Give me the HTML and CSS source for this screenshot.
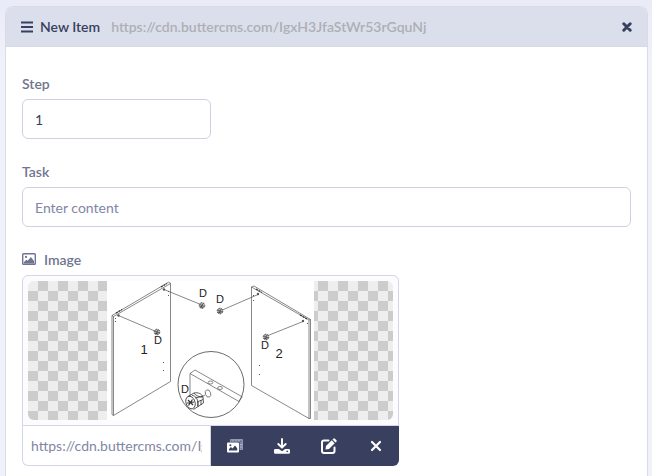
FILE: index.html
```html
<!DOCTYPE html>
<html lang="en">

<head>
    <meta charset="UTF-8">
    <meta name="viewport" content="width=device-width, initial-scale=1.0">
    <title>New Item</title>
    <link rel="stylesheet" href="styles.css">
</head>

<body>
    <div class="item">
        <div class="item-header">
            <svg class="drag" viewBox="0 0 12 12" width="12" height="12" aria-hidden="true">
                <path d="M0 1.500h12M0 6h12M0 10.500h12" stroke="currentColor" stroke-width="1.800"/>
            </svg>
            <span class="item-title">New Item</span>
            <span class="item-url">https://cdn.buttercms.com/IgxH3JfaStWr53rGquNj</span>
            <button class="item-close" type="button" aria-label="Remove item">
                <svg viewBox="0 0 10 10" width="10" height="10">
                    <path d="M1.8 1.8l6.4 6.4M8.2 1.8L1.8 8.2" stroke="currentColor" stroke-width="3" stroke-linecap="round"/>
                </svg>
            </button>
        </div>

        <form class="item-body">
            <div class="field">
                <label for="step">Step</label>
                <input class="text-input short" id="step" type="text" value="1">
            </div>

            <div class="field">
                <label for="task">Task</label>
                <input class="text-input" id="task" type="text" placeholder="Enter content">
            </div>

            <div class="field">
                <label for="image">
                    <svg viewBox="0 0 14 12" width="14" height="12" aria-hidden="true">
                        <rect x=".7" y=".7" width="12.6" height="10.6" rx=".8" fill="none" stroke="currentColor" stroke-width="1.4"/>
                        <circle cx="4" cy="3.9" r="1.1" fill="currentColor"/>
                        <path d="M2 10.5V9l2.400-2.300 1.300 1.100L8.900 4 12 8v2.500z" fill="currentColor"/>
                    </svg>
                    Image
                </label>
                <div class="media">
                    <div class="preview">
                        <div class="checker">
                            <svg class="drawing" viewBox="0 0 207 139" width="207" height="139">
                                <defs>
                                    <g id="cam">
                                        <circle r="2.800" fill="#bbb" stroke="#444" stroke-width=".9" stroke-dasharray="2 .8"/>
                                        <path d="M-2-1l4 2M-1 2l2-4M-2 1l3 1" stroke="#333" stroke-width=".7"/>
                                    </g>
                                </defs>
                                <rect width="207" height="139" fill="#fff"/>
                                <g fill="none" stroke="#555" stroke-width=".7">
                                    <!-- left panel -->
                                    <path d="M5 34.500L61.500 1.200l2 1V100.500L6.500 134.500 5 133.500zM6.500 134.500V35.500L63.500 2.500M5 34.500l1.500 1"/>
                                    <path d="M9 32l6-3.500M54 6l6-3.500" stroke="#333" stroke-width="1.300" stroke-dasharray="2 1"/>
                                    <!-- right panel -->
                                    <path d="M144.500 6V104.500L202 137.500h1.500V38.500L147 5zM144.500 6L202 39v98.500M202 39l1.500-.5"/>
                                    <path d="M149 8l6 3.500M193 34l7 4" stroke="#333" stroke-width="1.300" stroke-dasharray="2 1"/>
                                    <!-- leader lines -->
                                    <path d="M57 8.500L95 24M11.500 34.500L50 51M151 13.500L113 30M196 40.500L158.500 55.500"/>
                                    <!-- detail circle -->
                                    <circle cx="104" cy="103.500" r="33" stroke="#444" stroke-width=".8"/>
                                    <path d="M83 116V92.500l5-3.500 47.500 27M83 92.500L132 120.500M132 120.500l2.500-4.500"/>
                                    <ellipse cx="103.500" cy="101.500" rx="2.400" ry="1.500"/>
                                    <ellipse cx="113" cy="107" rx="2.400" ry="1.500"/>
                                    <ellipse cx="101" cy="112.500" rx="2.600" ry="3.800" transform="rotate(-20 101 112.500)"/>
                                    <path d="M98 114l-4 2"/>
                                </g>
                                <g fill="none" stroke="#333" stroke-width=".8">
                                    <ellipse cx="83.500" cy="121.500" rx="4.500" ry="6.500" transform="rotate(-20 83.500 121.500)"/>
                                    <path d="M81 115.500l6-3.500c4-1 8 1 9 4l.5 6-10 6.500M85 114.500c4 0 7 5 5.500 10.500M87 112c2 3 5 4 9 4M88 117l7-1.500M90 121l6-2.500M91 126v-5M94 124v-5"/>
                                    <path d="M81 119l5 5M85.500 118.500l-4 6M80 122l7-1" stroke-width="1.200"/>
                                </g>
                                <g fill="#555">
                                    <circle cx="57" cy="8.500" r="1.200"/>
                                    <circle cx="11.500" cy="34.500" r="1.200"/>
                                    <circle cx="151" cy="13" r="1.200"/>
                                    <circle cx="196" cy="40" r="1.200"/>
                                    <path d="M61 10h1v1h-1zM61 14h1v1h-1zM8 37h1v1H8zM8 40h1v1H8zM56 81h1v1h-1zM56 89h1v1h-1zM146 14h1v1h-1zM146 19h1v1h-1zM152 84h1v1h-1zM152 93h1v1h-1zM200 42h1v1h-1z"/>
                                </g>
                                <use href="#cam" x="95" y="24.500"/>
                                <use href="#cam" x="113" y="30"/>
                                <use href="#cam" x="50" y="51"/>
                                <use href="#cam" x="159" y="56"/>
                                <g class="drawing-text" text-anchor="middle">
                                    <text x="96" y="16">D</text>
                                    <text x="113" y="22">D</text>
                                    <text x="51" y="63">D</text>
                                    <text x="158" y="68">D</text>
                                    <text x="78" y="112">D</text>
                                    <text class="num" x="37" y="73">1</text>
                                    <text class="num" x="172" y="77">2</text>
                                </g>
                            </svg>
                        </div>
                    </div>
                    <div class="media-bar">
                        <input class="media-url" id="image" type="text" value="https://cdn.buttercms.com/IgxH3JfaStWr53rGquNj">
                        <div class="media-actions">
                            <button type="button" aria-label="Choose from library">
                                <svg viewBox="0 0 16 14" width="16" height="14">
                                    <path d="M3.500 3V.5h12v10h-3" fill="none" stroke="#9198b3"/>
                                    <path d="M4 1h11v1.800H4zM12.500 3H15v7h-2.500z" fill="#7b84a3"/>
                                    <path d="M6 1v1.500M9 1v1.500M12 1v1.500M13 5.500h2M13 8h2" stroke="#b3b8ca"/>
                                    <rect y="3.500" width="12" height="10" rx="1" fill="#fff"/>
                                    <path d="M2 11.500V10l2-2 1.500 1.500L8 6.500l2.200 2.800v2.200z" fill="#39405f"/>
                                    <circle cx="3.400" cy="6.200" r="1" fill="#39405f"/>
                                </svg>
                            </button>
                            <button type="button" aria-label="Download">
                                <svg viewBox="0 0 16 16" width="16" height="16">
                                    <path d="M8 1v8M4.300 6L8 9.700 11.700 6" fill="none" stroke="#fff" stroke-width="1.900" stroke-linecap="round" stroke-linejoin="round"/>
                                    <path d="M1.300 11h3.500L8 13.200l3.200-2.200h3.500q1.300 0 1.300 1.300v2.200q0 1.300-1.300 1.300H1.300Q0 15.800 0 14.500v-2.200Q0 11 1.300 11z" fill="#fff"/>
                                    <circle cx="13.200" cy="13.400" r=".8" fill="#39405f"/>
                                </svg>
                            </button>
                            <button type="button" aria-label="Edit">
                                <svg viewBox="0 0 16 16" width="16" height="16">
                                    <path d="M7.500 2.500H3Q1 2.500 1 4.500V13q0 2 2 2h8.500q2 0 2-2V9.500" fill="none" stroke="#fff" stroke-width="2" stroke-linecap="round"/>
                                    <path d="M10.700 2.300l3 3L8 11l-3.500.6L5 8zM11.500 1.500l.8-.8q.8-.8 1.600 0l1.400 1.400q.8.800 0 1.600l-.8.800z" fill="#fff"/>
                                </svg>
                            </button>
                            <button type="button" aria-label="Clear">
                                <svg viewBox="0 0 12 12" width="12" height="12">
                                    <path d="M2 2l8 8M10 2l-8 8" stroke="#fff" stroke-width="2.200" stroke-linecap="round"/>
                                </svg>
                            </button>
                        </div>
                    </div>
                </div>
            </div>
        </form>
    </div>
</body>

</html>
```
FILE: styles.css
```css
* {
    box-sizing: border-box;
}

body {
    margin: 0;
    padding: 6px 4px 0 5px;
    background: linear-gradient(#e9ebf7, #f0f1f9 60px);
    font-family: Lato, "Open Sans", sans-serif;
    font-size: 14px;
    color: #39405f;
}

.item {
    background-color: #fff;
    border: 1px solid #d9dbec;
    border-bottom: 0;
    border-radius: 8px 8px 0 0;
    overflow: hidden;
}

.item-header {
    display: flex;
    align-items: center;
    height: 40px;
    padding: 0 15px;
    background-color: #dbdfec;
    border-bottom: 1px solid #d9d9e6;
    font-weight: 600;
}

.item-title {
    margin: 0 11px 0 7px;
}

.item-url {
    color: #adafb5;
}

.item-close {
    display: flex;
    margin-left: auto;
    padding: 0;
    border: 0;
    background: none;
    color: #39405f;
}

.item-body {
    display: flex;
    flex-direction: column;
    gap: 24px;
    padding: 28px 16px 10px;
}

.field label {
    display: flex;
    align-items: center;
    gap: 8px;
    height: 16px;
    margin-bottom: 8px;
    font-weight: 600;
    color: #6f758f;
}

.text-input {
    display: block;
    width: 100%;
    height: 40px;
    padding: 0 12px;
    border: 1px solid #d0d1e0;
    border-radius: 6px;
    background-color: #fff;
    font: inherit;
    color: #39405f;
}

.text-input::placeholder {
    color: #8286a5;
}

.short {
    width: 189px;
}

.media {
    width: 377px;
    max-width: 100%;
}

.preview {
    padding: 5px;
    border: 1px solid #d3d6e6;
    border-radius: 6px 6px 0 0;
    background-color: #fcfcfe;
}

.checker {
    display: flex;
    justify-content: center;
    border-radius: 6px;
    overflow: hidden;
    background: repeating-conic-gradient(#ccc 0 25%, #eee 0 50%) 0 0 / 20px 20px;
}

.media-bar {
    display: flex;
    height: 40px;
}

.media-url {
    flex: 1;
    min-width: 0;
    padding: 0 8px;
    border: 1px solid #d3d6e6;
    border-width: 0 1px 1px;
    border-radius: 0 0 0 6px;
    background-color: #fff;
    font: inherit;
    color: #8286a5;
}

.media-actions {
    display: flex;
    width: 188px;
    border-radius: 0 0 6px 0;
    background-color: #39405f;
}

.media-actions button {
    display: flex;
    flex: 1;
    align-items: center;
    justify-content: center;
    padding: 0;
    border: 0;
    background: none;
}

.drawing-text {
    font-family: "Liberation Sans", Arial, sans-serif;
    font-size: 11px;
    fill: #222;
}

.drawing-text .num {
    font-size: 13px;
}
```
